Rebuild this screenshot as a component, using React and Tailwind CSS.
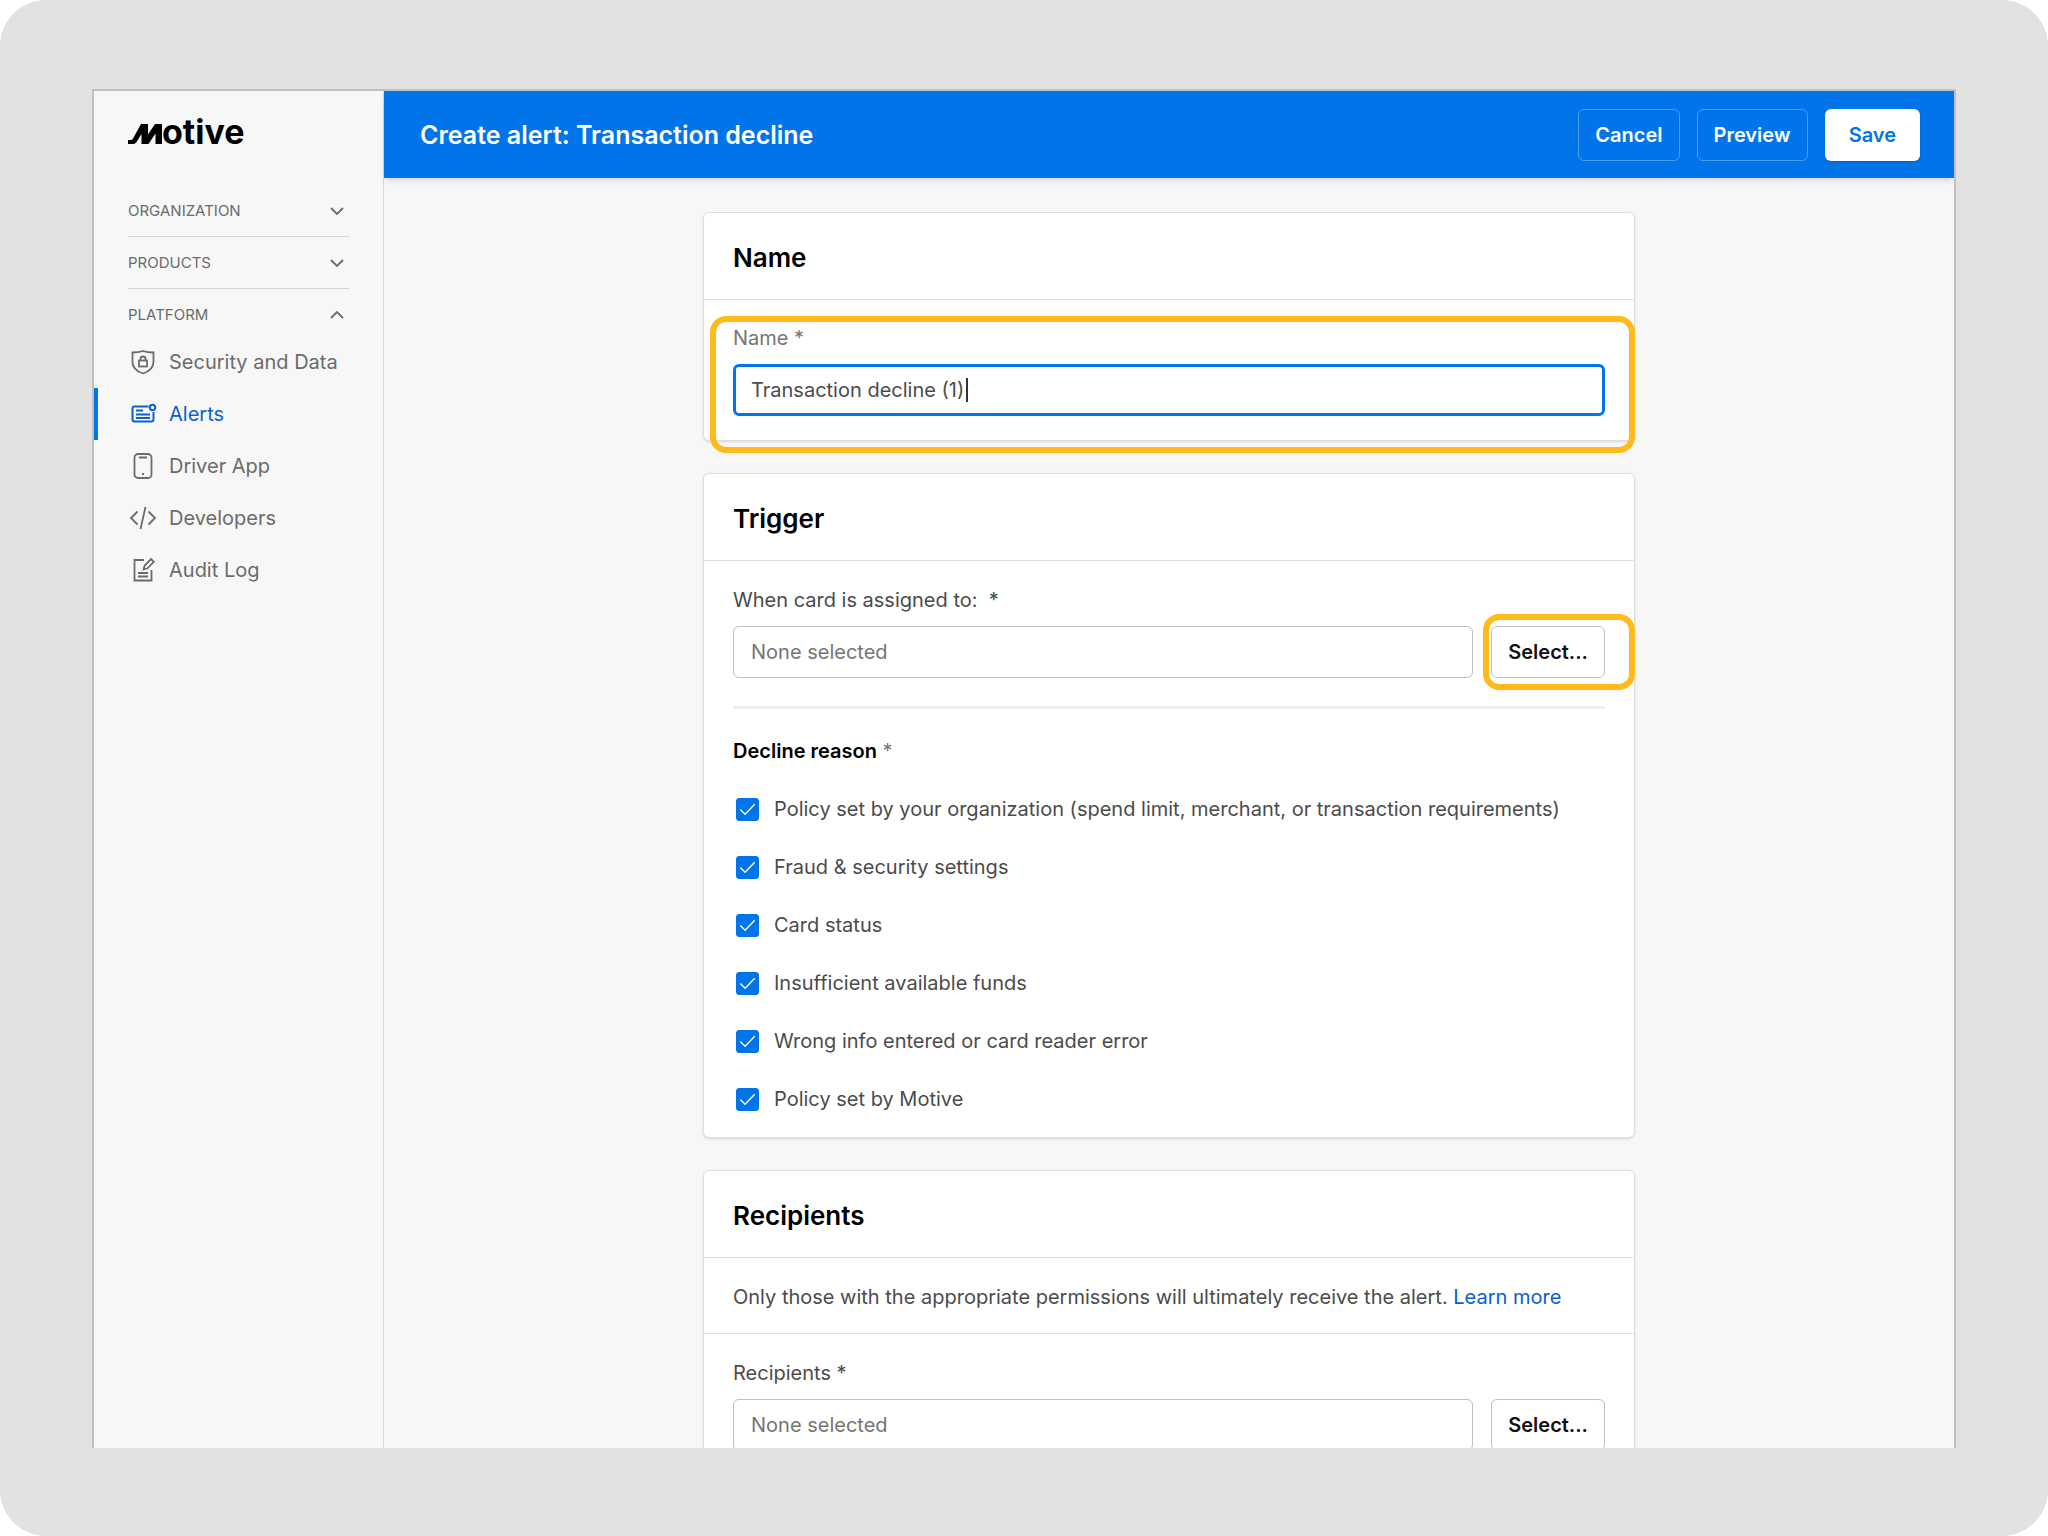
import { useState } from 'react'

const sections = ['Organization', 'Products']

const platformItems = [
  { label: 'Security and Data', icon: SecurityIcon },
  { label: 'Alerts', icon: AlertsIcon, active: true },
  { label: 'Driver App', icon: PhoneIcon },
  { label: 'Developers', icon: CodeIcon },
  { label: 'Audit Log', icon: AuditIcon },
]

const declineReasons = [
  'Policy set by your organization (spend limit, merchant, or transaction requirements)',
  'Fraud & security settings',
  'Card status',
  'Insufficient available funds',
  'Wrong info entered or card reader error',
  'Policy set by Motive',
]

export default function App() {
  return (
    <div className="h-screen overflow-hidden rounded-[46px] bg-[#e2e2e2] px-[92px] pt-[89px] pb-[88px] font-['Inter',sans-serif] text-[20px] leading-7 text-[#4b4b4b]">
      <div className="flex h-full overflow-hidden border-x-2 border-t-2 border-[#c0c0c0] bg-[#f7f7f7]">
        <Sidebar />
        <div className="flex min-w-0 flex-1 flex-col">
          <Header />
          <main className="flex min-h-0 flex-1 flex-col items-center overflow-hidden px-8 pt-[34px]">
            <div className="flex w-full max-w-[932px] flex-col gap-8">
              <NameCard />
              <TriggerCard />
              <RecipientsCard />
            </div>
          </main>
        </div>
      </div>
    </div>
  )
}

function Sidebar() {
  return (
    <aside className="w-[290px] shrink-0 border-r border-[#d9d9d9] text-[#6b6b6b]">
      <div className="px-[34px] pt-4">
        <Logo />
      </div>
      <nav className="pt-8">
        {sections.map((name) => (
          <div key={name} className="mx-[34px] border-b border-[#d4d4d4]">
            <SectionToggle name={name} />
          </div>
        ))}
        <div className="mx-[34px]">
          <SectionToggle name="Platform" open />
        </div>
        <ul className="-mt-1">
          {platformItems.map(({ label, icon: Icon, active }) => (
            <li key={label} className="h-[52px]">
              <a
                href="#"
                className={
                  active
                    ? 'flex h-full items-center gap-3 border-l-4 border-[#0074e8] pl-[31px] text-[#0b60d0]'
                    : 'flex h-full items-center gap-3 border-l-4 border-transparent pl-[31px]'
                }
              >
                <Icon />
                {label}
              </a>
            </li>
          ))}
        </ul>
      </nav>
    </aside>
  )
}

function SectionToggle({ name, open }) {
  return (
    <button type="button" className="flex h-[51px] w-full items-center justify-between pr-1 text-[15px] uppercase">
      {name}
      <svg width="16" height="16" viewBox="0 0 16 16" fill="none" stroke="currentColor" strokeWidth="1.8">
        {open ? <path d="M2 11l6-6 6 6" /> : <path d="M2 5l6 6 6-6" />}
      </svg>
    </button>
  )
}

function Header() {
  return (
    <header className="z-10 flex h-[87px] shrink-0 items-center justify-between bg-[#0074e8] pr-[34px] pl-9 shadow-md">
      <h1 className="text-[25px] font-semibold text-white">Create alert: Transaction decline</h1>
      <div className="flex gap-[17px] font-semibold">
        <button type="button" className="h-[52px] rounded-md border border-[#4c9ef0] px-4 text-white">
          Cancel
        </button>
        <button type="button" className="h-[52px] rounded-md border border-[#4c9ef0] px-4 text-white">
          Preview
        </button>
        <button type="button" className="h-[52px] rounded-md bg-white px-6 text-[#0074e8] shadow">
          Save
        </button>
      </div>
    </header>
  )
}

function Card({ title, children }) {
  return (
    <section className="rounded-md border border-[#dedede] bg-white shadow-sm">
      <h2 className="flex h-[87px] items-center border-b border-[#dedede] px-[29px] pt-1 text-[26px] font-semibold text-black">
        {title}
      </h2>
      {children}
    </section>
  )
}

function NameCard() {
  const [name, setName] = useState('Transaction decline (1)')

  return (
    <Card title="Name">
      <div className="relative px-[29px] pt-6 pb-6">
        <label htmlFor="alert-name" className="block text-[#757575]">
          Name *
        </label>
        <div className="relative mt-3">
          <input
            id="alert-name"
            value={name}
            onChange={(e) => setName(e.target.value)}
            className="block h-[52px] w-full rounded-md border-3 border-[#0074e8] bg-white px-[15px] outline-none"
          />
          {/* Text cursor */}
          <span className="absolute top-[14px] left-[233px] h-6 w-0.5 bg-[#333333]" />
        </div>
        <div className="pointer-events-none absolute top-4 right-[-1px] bottom-[-13px] left-1.5 rounded-2xl border-6 border-[#ffbb1c]" />
      </div>
    </Card>
  )
}

function TriggerCard() {
  return (
    <Card title="Trigger">
      <div className="px-[29px] pt-[25px] pb-6">
        <label htmlFor="assigned-to" className="block">
          When card is assigned to: &nbsp;*
        </label>
        <SelectRow id="assigned-to" highlighted />
        <div className="mt-7 border-t-3 border-[#efefef] pt-7">
          <fieldset>
            <legend className="mb-[30px]">
              <span className="font-semibold text-black">Decline reason</span>{' '}
              <span className="text-[#757575]">*</span>
            </legend>
            <div className="flex flex-col gap-[30px]">
              {declineReasons.map((reason) => (
                <Checkbox key={reason} label={reason} />
              ))}
            </div>
          </fieldset>
        </div>
      </div>
    </Card>
  )
}

function RecipientsCard() {
  return (
    <Card title="Recipients">
      <p className="border-b border-[#dedede] px-[29px] pt-[25px] pb-[22px]">
        Only those with the appropriate permissions will ultimately receive the alert.{' '}
        <a href="#" className="text-[#0b60d0]">
          Learn more
        </a>
      </p>
      <div className="px-[29px] pt-[25px] pb-6">
        <label htmlFor="recipients" className="block">
          Recipients *
        </label>
        <SelectRow id="recipients" />
      </div>
    </Card>
  )
}

function SelectRow({ id, highlighted }) {
  return (
    <div className="mt-3 flex gap-[18px]">
      <input
        id={id}
        readOnly
        placeholder="None selected"
        className="h-[52px] min-w-0 flex-1 rounded-md border border-[#c0c0c0] bg-white px-[17px] outline-none placeholder:text-[#757575]"
      />
      <div className="relative">
        <button type="button" className="h-[52px] rounded-md border border-[#c0c0c0] bg-white px-4 font-semibold text-[#111111]">
          Select...
        </button>
        {highlighted && (
          <div className="pointer-events-none absolute -top-3 -right-[30px] -bottom-3 -left-2 rounded-2xl border-6 border-[#ffbb1c]" />
        )}
      </div>
    </div>
  )
}

function Checkbox({ label }) {
  return (
    <label className="flex items-center gap-[15px] pl-[3px]">
      <span className="grid shrink-0 place-items-center">
        <input
          type="checkbox"
          defaultChecked
          className="peer col-start-1 row-start-1 size-[23px] appearance-none rounded-[3px] border border-[#c0c0c0] checked:border-[#0074e8] checked:bg-[#0074e8]"
        />
        <svg
          className="pointer-events-none invisible col-start-1 row-start-1 peer-checked:visible"
          width="23"
          height="23"
          viewBox="0 0 24 24"
          fill="none"
          stroke="white"
          strokeWidth="1.4"
        >
          <path d="M4.5 12l5 5L19.5 6.5" />
        </svg>
      </span>
      {label}
    </label>
  )
}

function Logo() {
  return (
    <svg width="128" height="46" viewBox="0 0 128 46" role="img" aria-label="Motive">
      <path
        d="M0 33h2.500c1.200 0 1.900-.5 2.500-1.500L13 17h7v10.500L27 17h7v20h-6.500V26.500L20.500 37H13.500V27L8.500 35c-.9 1.400-2 2-4 2H0z"
        fill="black"
      />
      <text x="34" y="37" fontSize="34" fontWeight="700" fill="black">
        otive
      </text>
    </svg>
  )
}

function SecurityIcon() {
  return (
    <svg width="28" height="28" viewBox="0 0 28 28" fill="none" stroke="currentColor" strokeWidth="1.8">
      <path d="M14 3c-3.500 1.200-7 1.500-10.500 1.500V14c0 5.500 4.500 9.500 10.500 11.500C20 23.500 24.500 19.500 24.500 14V4.500C21 4.500 17.500 4.200 14 3z" />
      <rect x="10" y="12.500" width="8" height="6" />
      <path d="M11.500 12.500V11a2.500 2.500 0 0 1 5 0v1.500" />
    </svg>
  )
}

function AlertsIcon() {
  return (
    <svg width="28" height="28" viewBox="0 0 28 28" fill="none" stroke="currentColor" strokeWidth="2">
      <path d="M19.500 6.500H5.500a2 2 0 0 0-2 2v11a2 2 0 0 0 2 2h17a2 2 0 0 0 2-2V12" />
      <circle cx="23.500" cy="7.500" r="2.700" />
      <path d="M7 10.500h7M7 14.500h14M7 18h14" />
    </svg>
  )
}

function PhoneIcon() {
  return (
    <svg width="28" height="28" viewBox="0 0 28 28" fill="none" stroke="currentColor" strokeWidth="1.8">
      <rect x="5.500" y="2" width="17" height="24" rx="3.500" />
      <path d="M10 5.500h8M13 22h2" />
    </svg>
  )
}

function CodeIcon() {
  return (
    <svg width="28" height="28" viewBox="0 0 28 28" fill="none" stroke="currentColor" strokeWidth="1.8">
      <path d="M8.500 7.500L2 14l6.500 6.500M19.500 7.500L26 14l-6.500 6.500M16.500 3l-5 22" />
    </svg>
  )
}

function AuditIcon() {
  return (
    <svg width="28" height="28" viewBox="0 0 28 28" fill="none" stroke="currentColor" strokeWidth="1.8">
      <path d="M15 4H5.500v20.500h17V14" />
      <path d="M14.500 13.500l1.200-4L22 3l2.800 2.800-6.300 6.500-4 1.200z" />
      <path d="M9 17h10M9 20.500h10" />
    </svg>
  )
}
